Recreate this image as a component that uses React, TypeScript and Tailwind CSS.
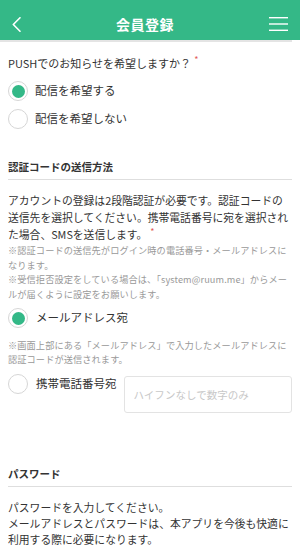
import React from "react";

const font = { fontFamily: '"Noto Sans CJK JP", "Noto Sans", sans-serif' };

function Radio({ checked }: { checked?: boolean }) {
  return (
    <span className="flex h-[20px] w-[20px] flex-none items-center justify-center rounded-full border border-[#d6d6d6] bg-white">
      {checked && <span className="h-[13px] w-[13px] rounded-full bg-[#33b887]" />}
    </span>
  );
}

function Req() {
  return <span className="ml-[3px] align-top text-[9px] leading-[12px] text-[#e25b5b]">*</span>;
}

function Heading({ children }: { children: React.ReactNode }) {
  return (
    <div className="border-b border-[#dedede] pb-[3px] text-[10.5px] font-bold leading-[18px] text-[#333]">
      {children}
    </div>
  );
}

export default function App() {
  return (
    <div className="min-h-screen w-[300px] overflow-hidden bg-white" style={font}>
      <header className="flex h-[40px] items-center justify-between bg-[#34b887] pt-[8px] pl-[12px] pr-[12px] text-white">
        <svg width="9" height="15" viewBox="0 0 9 15" fill="none">
          <path d="M8 0.8 L1.3 7.5 L8 14.2" stroke="white" strokeWidth="1.6" strokeLinecap="round" strokeLinejoin="round" />
        </svg>
        <h1 className="text-[14px] font-bold tracking-[0.5px]">会員登録</h1>
        <svg width="19" height="14" viewBox="0 0 19 14">
          <rect x="0" y="0" width="19" height="1.4" fill="white" />
          <rect x="0" y="6.3" width="19" height="1.4" fill="white" />
          <rect x="0" y="12.6" width="19" height="1.4" fill="white" />
        </svg>
      </header>
      <div className="mr-[8px] h-[2px] bg-[#e4e4e4]" />

      <main className="px-[8px] text-[#333]">
        <p className="mt-[12px] text-[11px] leading-[18px]">
          PUSHでのお知らせを希望しますか？<Req />
        </p>
        <div className="mt-[5px]">
          <label className="flex h-[28px] items-center gap-[7px] text-[11.5px]">
            <Radio checked />
            配信を希望する
          </label>
          <label className="flex h-[28px] items-center gap-[7px] text-[11.5px]">
            <Radio />
            配信を希望しない
          </label>
        </div>

        <div className="mt-[25px]">
          <Heading>認証コードの送信方法</Heading>
        </div>
        <p className="mt-[12px] whitespace-nowrap text-[10.8px] leading-[17px]">
          アカウントの登録は2段階認証が必要です。認証コードの
          <br />
          送信先を選択してください。携帯電話番号に宛を選択され
          <br />
          た場合、SMSを送信します。<Req />
        </p>
        <div className="whitespace-nowrap text-[9.2px] leading-[14.5px] tracking-[0.1px] text-[#999]">
          <p>
            ※認証コードの送信先がログイン時の電話番号・メールアドレスに
            <br />
            なります。
          </p>
          <p>
            ※受信拒否設定をしている場合は、「system@ruum.me」からメー
            <br />
            ルが届くように設定をお願いします。
          </p>
        </div>

        <label className="mt-[3px] flex h-[28px] items-center gap-[8px] text-[11.5px]">
          <Radio checked />
          メールアドレス宛
        </label>
        <p className="mt-[6px] whitespace-nowrap text-[9.2px] leading-[14px] tracking-[0.1px] text-[#999]">
          ※画面上部にある「メールアドレス」で入力したメールアドレスに
          <br />
          認証コードが送信されます。
        </p>

        <div className="mt-[8px] flex items-start">
          <label className="flex h-[20px] flex-none items-center gap-[8px] text-[11.5px]">
            <Radio />
            携帯電話番号宛
          </label>
          <input
            className="ml-[7px] mt-[2px] h-[37px] min-w-0 flex-1 rounded-[3px] border border-[#e3e3e3] px-[9px] text-[10.5px] outline-none placeholder:text-[#c8c8c8]"
            placeholder="ハイフンなしで数字のみ"
          />
        </div>

        <div className="mt-[52px]">
          <Heading>パスワード</Heading>
        </div>
        <p className="mt-[12px] whitespace-nowrap text-[10.8px] leading-[16px]">
          パスワードを入力してください。
          <br />
          メールアドレスとパスワードは、本アプリを今後も快適に
          <br />
          利用する際に必要になります。
        </p>
      </main>
    </div>
  );
}
